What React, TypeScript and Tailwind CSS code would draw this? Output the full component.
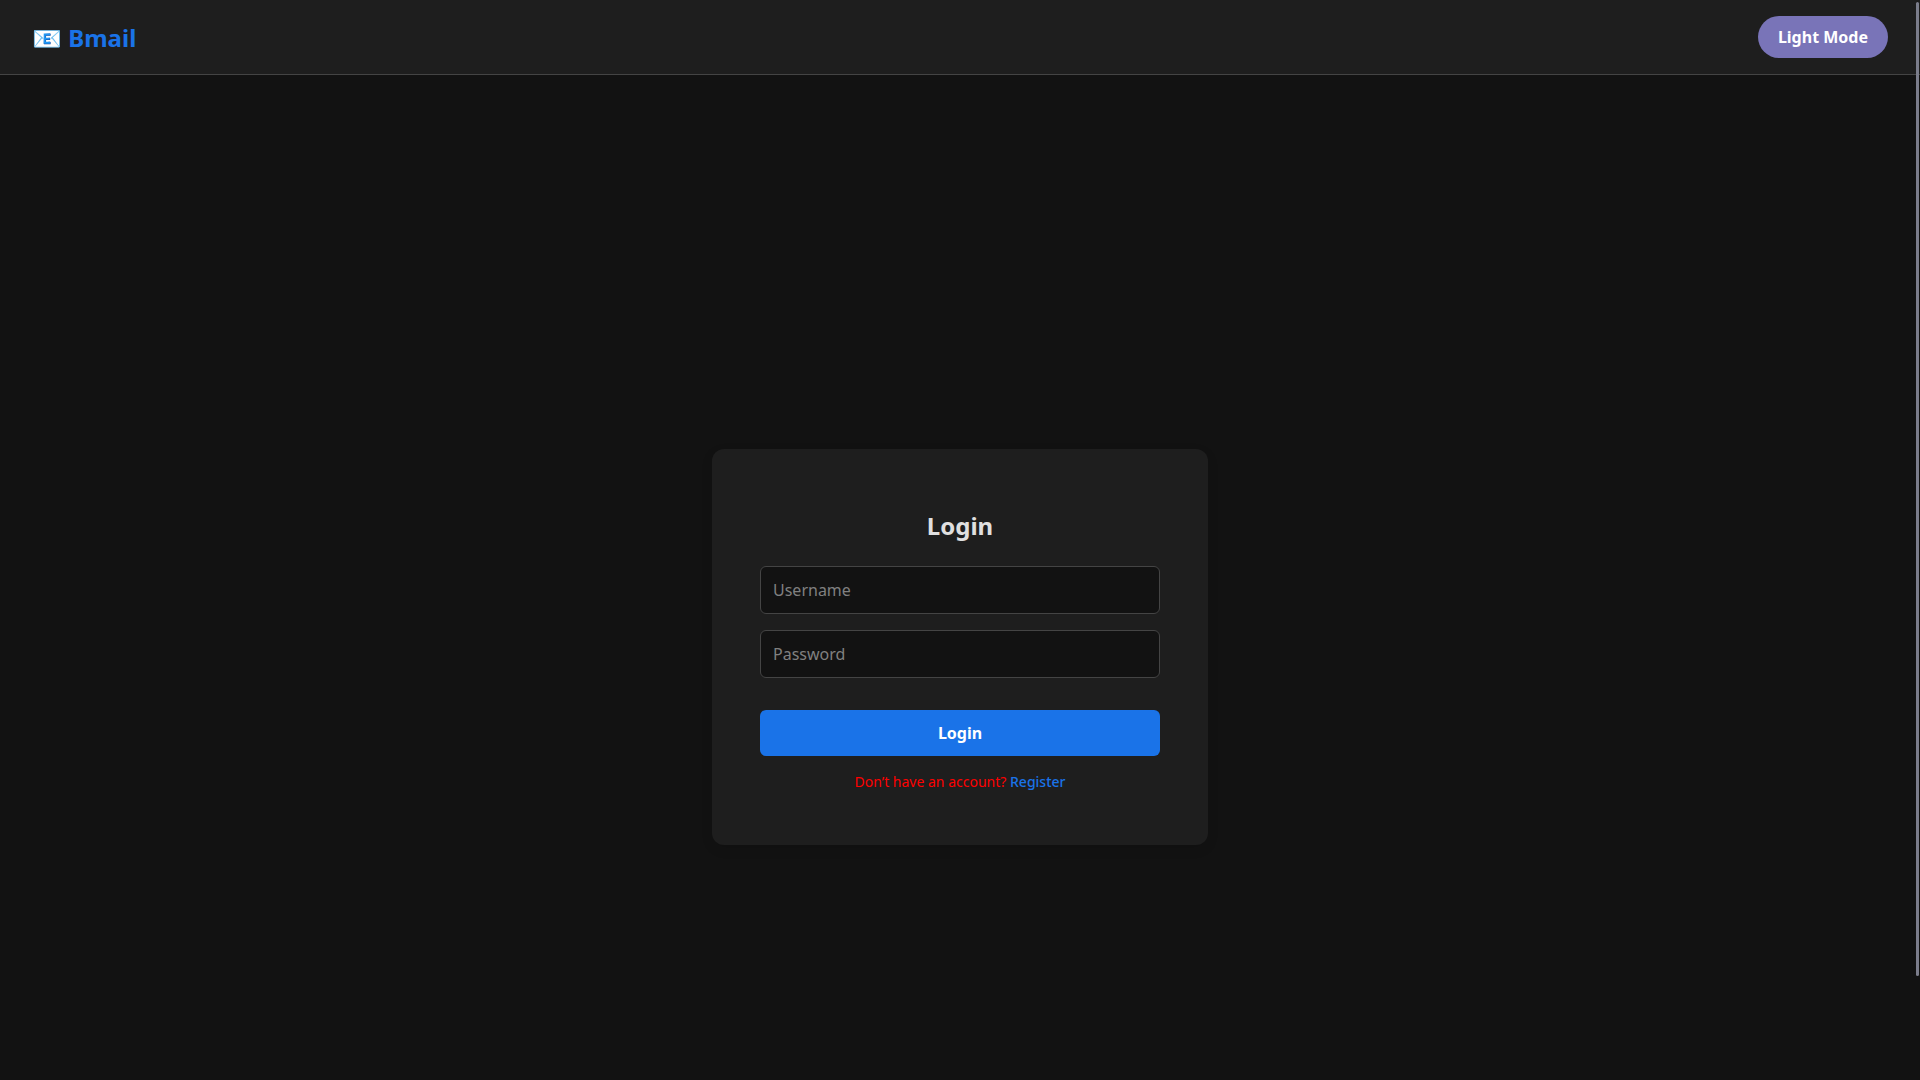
function Field({ label, type }: { label: string; type: string }) {
  return (
    <input
      type={type}
      placeholder={label}
      className="block h-12 w-full rounded-md border border-[#444] bg-[#121212] px-3 text-base text-[#e0e0e0] outline-none placeholder:text-[#808080]"
    />
  );
}

export default function App() {
  return (
    <div className="relative flex h-screen flex-col overflow-hidden bg-[#121212] font-['Noto_Sans',sans-serif]">
      <header className="flex h-[75px] shrink-0 items-center justify-between border-b border-[#444] bg-[#1e1e1e] px-8">
        <div className="text-2xl leading-[33px] font-bold text-[#1a73e8]">📧 Bmail</div>
        <button className="h-[42px] rounded-full bg-[#7974b8] px-5 text-base font-bold text-white">
          Light Mode
        </button>
      </header>
      <main className="flex justify-center pt-[374px]">
        <form className="flex h-[396px] w-[496px] flex-col rounded-xl bg-[#1e1e1e] px-12 pt-[60px] shadow-[0_4px_12px_rgba(0,0,0,0.1)]">
          <h2 className="mb-6 text-center text-2xl leading-[33px] font-bold text-[#e0e0e0]">Login</h2>
          <div className="flex flex-col gap-4">
            <Field label="Username" type="text" />
            <Field label="Password" type="password" />
          </div>
          <button
            type="button"
            className="mt-8 h-[46px] w-full shrink-0 rounded-md bg-[#1a73e8] text-base font-bold text-white"
          >
            Login
          </button>
          <p className="mt-4 text-center text-sm leading-5 text-[#ff0000]">
            Don’t have an account? <a className="font-medium text-[#1a73e8]">Register</a>
          </p>
        </form>
      </main>
      <div className="absolute top-[2px] right-[1px] h-[974px] w-[3px] rounded-full bg-[#7b7d8b]" />
    </div>
  );
}
